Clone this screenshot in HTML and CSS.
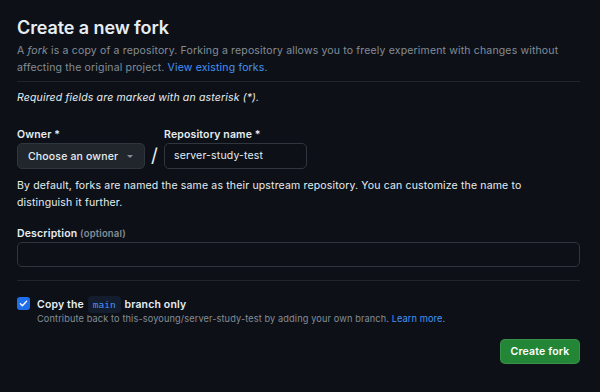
FILE: index.html
```html
<!DOCTYPE html>
<html>
<head>
<meta charset="utf-8">
<link rel="stylesheet" href="styles.css">
</head>
<body>
<main class="page">
  <h1 class="title">Create a new fork</h1>
  <p class="lead">A <em>fork</em> is a copy of a repository. Forking a repository allows you to freely experiment with changes without affecting the original project. <a class="link" href="#">View existing forks.</a></p>
  <div class="divider"></div>
  <p class="required">Required fields are marked with an asterisk (*).</p>

  <div class="name-row">
    <div class="field">
      <label class="label">Owner *</label>
      <button class="owner-btn">Choose an owner <span class="caret"></span></button>
    </div>
    <span class="slash">/</span>
    <div class="field">
      <label class="label">Repository name *</label>
      <div class="input repo-input">server-study-test</div>
    </div>
  </div>
  <p class="help">By default, forks are named the same as their upstream repository. You can customize the name to distinguish it further.</p>

  <label class="label desc-label">Description <span class="optional">(optional)</span></label>
  <div class="input desc-input"></div>

  <div class="divider divider-2"></div>

  <div class="check-row">
    <span class="checkbox">
      <svg width="9" height="9" viewBox="0 0 16 16"><path d="M2.5 8.5l3.5 3.5 7.5-8" fill="none" stroke="#fff" stroke-width="2.4" stroke-linecap="round" stroke-linejoin="round"/></svg>
    </span>
    <div class="check-text">
      <div class="check-label">Copy the <code class="code">main</code> branch only</div>
      <div class="check-note">Contribute back to this-soyoung/server-study-test by adding your own branch. <a class="link" href="#">Learn more.</a></div>
    </div>
  </div>

  <div class="actions">
    <button class="create-btn">Create fork</button>
  </div>
</main>
</body>
</html>
```
FILE: styles.css
```css
html, body {
  margin: 0;
  padding: 0;
  background: #0d1117;
}
body {
  font-family: Inter, "Noto Sans", "Liberation Sans", sans-serif;
  color: #e6edf3;
  font-size: 10.5px;
  letter-spacing: 0.16px;
}
.page {
  width: 563px;
  padding: 16px 0 0 17px;
}
.title {
  margin: 0;
  font-size: 18px;
  line-height: 24px;
  font-weight: 600;
  letter-spacing: -0.1px;
}
.lead {
  margin: 2px 0 0;
  font-size: 10.5px;
  line-height: 17px;
  color: #848d97;
}
.link {
  color: #4493f8;
  text-decoration: none;
}
.divider {
  height: 1px;
  background: #21262d;
  margin-top: 5px;
}
.required {
  margin: 7px 0 0;
  font-style: italic;
  line-height: 17px;
}
.name-row {
  display: flex;
  align-items: flex-end;
  margin-top: 21px;
}
.field {
  display: flex;
  flex-direction: column;
}
.label {
  display: block;
  font-weight: 600;
  line-height: 15px;
  margin-bottom: 1px;
}
.owner-btn {
  height: 26px;
  box-sizing: border-box;
  width: 128px;
  padding: 0 10px;
  background: #21262d;
  border: 1px solid #30363d;
  border-radius: 5px;
  color: #e6edf3;
  font: 500 10.5px Inter, "Noto Sans", sans-serif;
  letter-spacing: 0.16px;
  white-space: nowrap;
  display: flex;
  align-items: center;
  gap: 9px;
}
.caret {
  flex: none;
  width: 0;
  height: 0;
  border-left: 3px solid transparent;
  border-right: 3px solid transparent;
  border-top: 3px solid #848d97;
}
.slash {
  font-size: 19px;
  line-height: 24px;
  width: 19px;
  text-align: center;
  color: #e6edf3;
  margin-bottom: 1px;
}
.input {
  box-sizing: border-box;
  border: 1px solid #30363d;
  border-radius: 5px;
  background: #0d1117;
}
.repo-input {
  width: 143px;
  height: 26px;
  padding: 0 9px;
  line-height: 24px;
}
.help {
  margin: 8px 0 0;
  padding-right: 6px;
  line-height: 17px;
}
.desc-label {
  margin-top: 15px;
}
.optional {
  font-size: 9.5px;
  color: #848d97;
}
.desc-input {
  height: 25px;
  margin-top: 0;
}
.divider-2 {
  margin-top: 13px;
}
.check-row {
  display: flex;
  align-items: flex-start;
  gap: 7px;
  margin-top: 15px;
}
.checkbox {
  width: 13px;
  height: 13px;
  border-radius: 3px;
  background: #1f6feb;
  display: flex;
  align-items: center;
  justify-content: center;
  margin-top: 1px;
}
.check-label {
  font-weight: 600;
  line-height: 17px;
}
.code {
  display: inline-block;
  font-family: "DejaVu Sans Mono", "Liberation Mono", monospace;
  font-size: 9.5px;
  font-weight: 400;
  letter-spacing: 0;
  line-height: 17px;
  color: #4493f8;
  background: #131d2e;
  border-radius: 4px;
  padding: 0 5px;
  margin: 0 1px;
}
.check-note {
  font-size: 9.2px;
  letter-spacing: 0.12px;
  line-height: 15px;
  color: #848d97;
  margin-top: -2px;
}
.actions {
  display: flex;
  justify-content: flex-end;
  margin-top: 13px;
}
.create-btn {
  width: 80px;
  height: 25px;
  background: #238636;
  border: 1px solid rgba(240,246,252,0.1);
  border-radius: 5px;
  color: #fff;
  font: 600 10.5px Inter, "Noto Sans", sans-serif;
  letter-spacing: 0.16px;
}
```
